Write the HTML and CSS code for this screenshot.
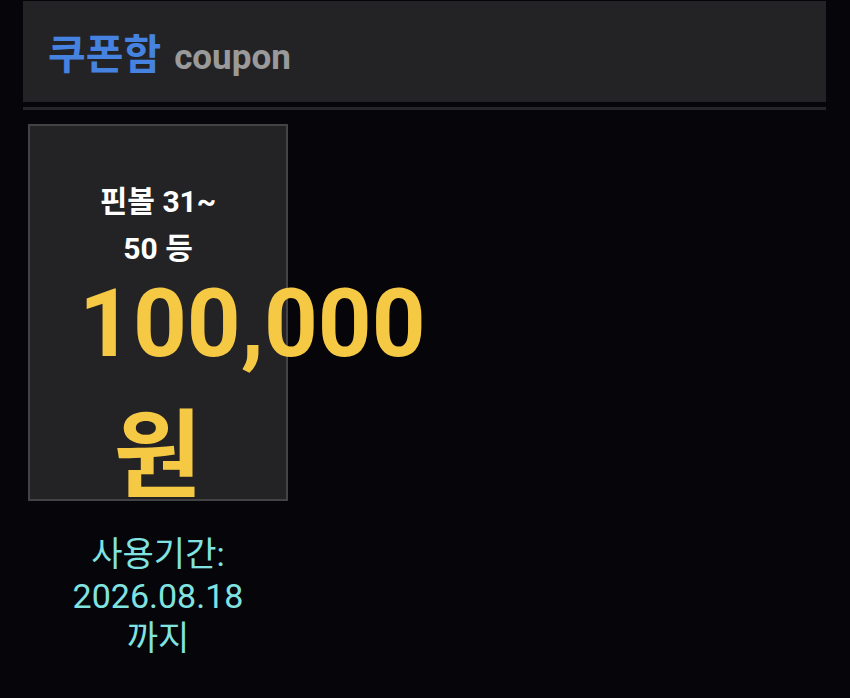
FILE: index.html
```html
<!DOCTYPE html>
<html lang="ko">
<head>
<meta charset="utf-8">
<link rel="stylesheet" href="styles.css">
<title>쿠폰함</title>
</head>
<body>
<div class="page">
  <header class="top">
    <h1 class="title"><span class="ko">쿠폰함</span> <span class="en">coupon</span></h1>
  </header>
  <div class="divider"></div>
  <div class="coupon">
    <div class="card">
      <div class="name">핀볼 31~ 50 등</div>
      <div class="amount">100,000</div>
      <div class="won">원</div>
    </div>
    <div class="expire">사용기간: 2026.08.18 까지</div>
  </div>
</div>
</body>
</html>
```

FILE: styles.css
```css
html, body {
  margin: 0;
  padding: 0;
  background: #060509;
}
body {
  font-family: Roboto, "Noto Sans CJK KR", sans-serif;
  width: 850px;
  height: 698px;
  overflow: hidden;
}
.page {
  padding: 1px 24px 0 23px;
}
.top {
  box-sizing: border-box;
  height: 101px;
  background: #232325;
  display: flex;
  align-items: center;
  padding: 8px 0 0 25px;
}
.title {
  margin: 0;
  font-weight: 700;
  line-height: 1;
  white-space: nowrap;
}
.ko {
  color: #4683e0;
  font-size: 41px;
}
.en {
  color: #9a9a9a;
  font-size: 35px;
  margin-left: 5px;
}
.divider {
  margin-top: 5px;
  height: 3px;
  background: #26262a;
}
.coupon {
  margin: 14px 0 0 5px;
  width: 260px;
}
.card {
  box-sizing: border-box;
  width: 260px;
  height: 377px;
  background: #232325;
  border: 2px solid #434345;
  padding: 52px 56px 0;
  text-align: center;
}
.name {
  color: #ffffff;
  font-size: 30px;
  font-weight: 700;
  line-height: 47px;
}
.amount {
  color: #f6c945;
  font-size: 94px;
  font-weight: 700;
  line-height: 104px;
  margin-left: -7px;
  text-align: left;
  white-space: nowrap;
}
.won {
  color: #f6c945;
  font-size: 96px;
  font-weight: 700;
  line-height: 160px;
}
.expire {
  margin: 32px auto 0;
  width: 200px;
  color: #80e3e0;
  font-size: 34px;
  line-height: 42px;
  text-align: center;
}
```
